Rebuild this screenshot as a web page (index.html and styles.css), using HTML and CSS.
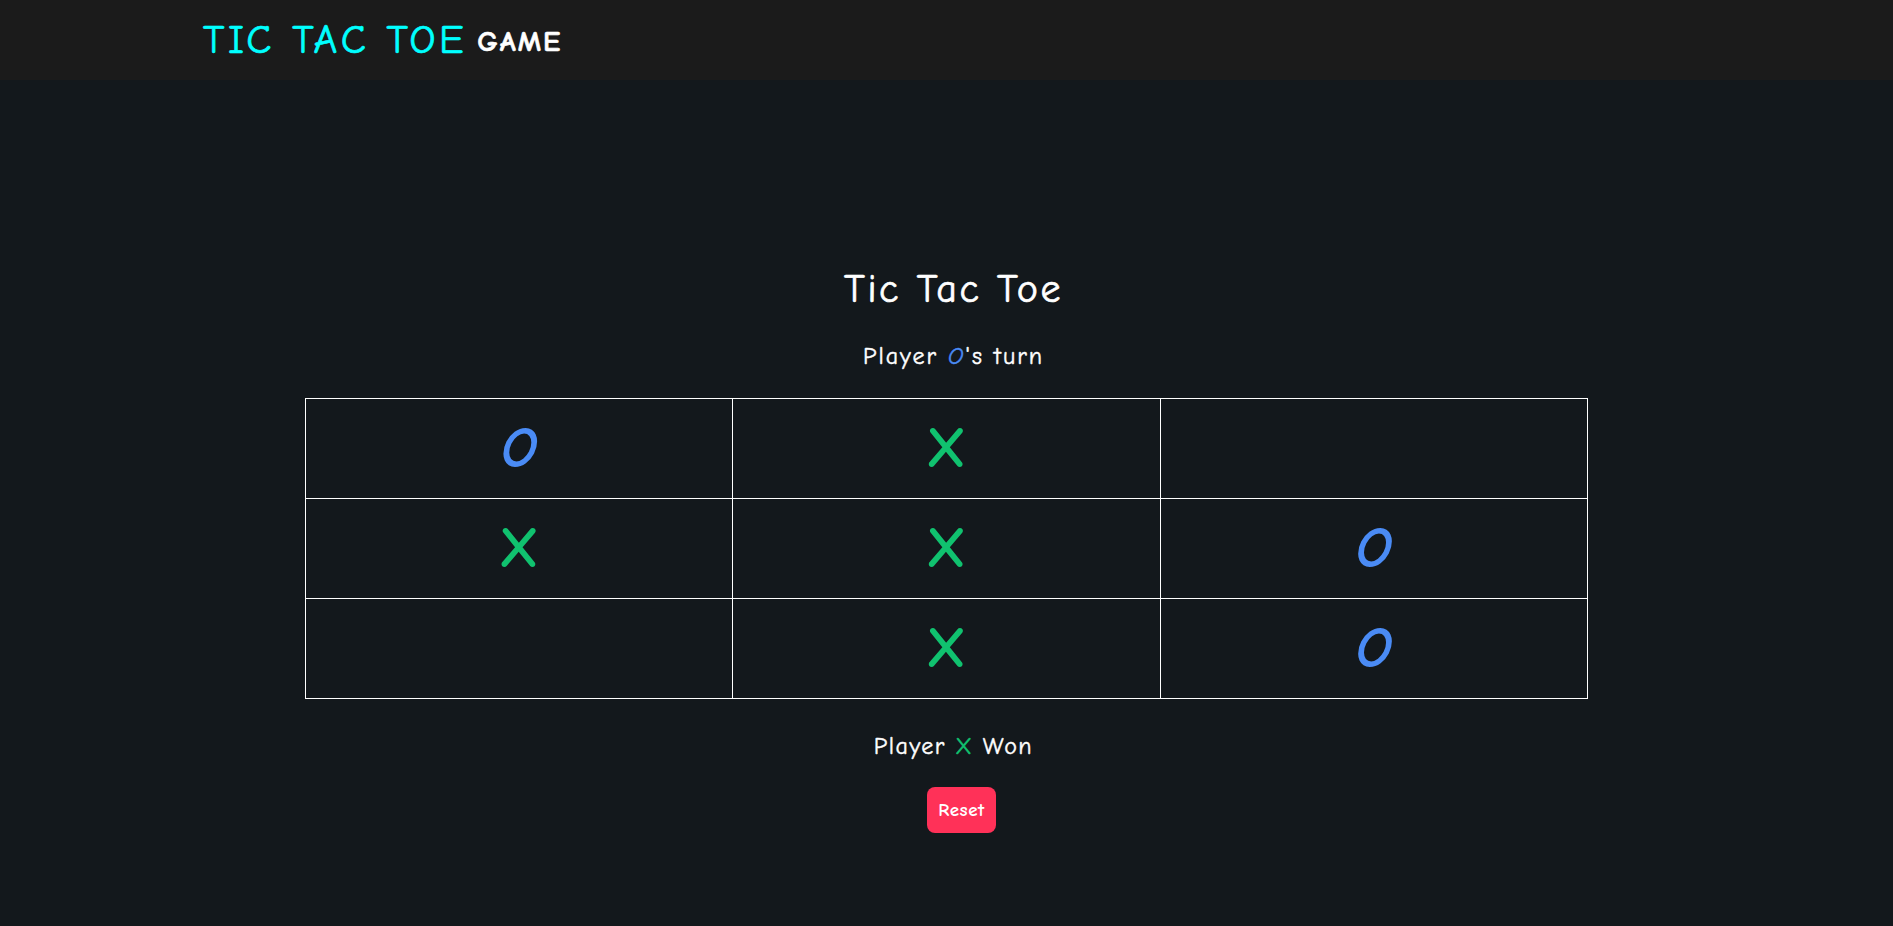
FILE: index.html
```html
<!DOCTYPE html>
<html lang="en">
<head>
<meta charset="utf-8">
<title>Tic Tac Toe</title>
<link rel="stylesheet" href="styles.css">
</head>
<body>
<header class="topbar">
  <span class="brand">TIC TAC TOE</span>
  <span class="brand-sub">GAME</span>
</header>
<main class="game">
  <h1 class="title">Tic Tac Toe</h1>
  <p class="status">Player <span class="mark-o">O</span>'s turn</p>
  <div class="board">
    <div class="cell"><span class="mark-o">O</span></div>
    <div class="cell"><span class="mark-x">X</span></div>
    <div class="cell"></div>
    <div class="cell"><span class="mark-x">X</span></div>
    <div class="cell"><span class="mark-x">X</span></div>
    <div class="cell"><span class="mark-o">O</span></div>
    <div class="cell"></div>
    <div class="cell"><span class="mark-x">X</span></div>
    <div class="cell"><span class="mark-o">O</span></div>
  </div>
  <p class="result">Player <span class="mark-x">X</span> Won</p>
  <button class="reset">Reset</button>
</main>
</body>
</html>
```
FILE: styles.css
```css
html, body {
  margin: 0;
  padding: 0;
}
body {
  background: #13181c;
  color: #ffffff;
  font-family: "Comic Sans MS", "Comic Neue", "DejaVu Sans", sans-serif;
  font-weight: 400;
  min-height: 926px;
}
.topbar {
  height: 80px;
  background: #1b1b1b;
  display: flex;
  align-items: center;
  gap: 10px;
  padding-left: 203px;
  box-sizing: border-box;
}
.brand {
  color: #00ffff;
  font-size: 41px;
  line-height: 48px;
  letter-spacing: 3.5px;
  -webkit-text-stroke: 0.7px currentColor;
}
.brand-sub {
  color: #ffffff;
  font-size: 29px;
  font-weight: 700;
  line-height: 48px;
  padding-top: 4px;
  letter-spacing: 2px;
  -webkit-text-stroke: 0.6px currentColor;
}
.game {
  display: flex;
  flex-direction: column;
  align-items: center;
  padding-top: 185px;
}
.title {
  margin: 0 0 0 14px;
  font-size: 40px;
  font-weight: 400;
  line-height: 48px;
  letter-spacing: 2.5px;
  -webkit-text-stroke: 0.7px currentColor;
}
.status {
  margin: 27px 0 0 14px;
  font-size: 24px;
  line-height: 32px;
  letter-spacing: 2px;
  -webkit-text-stroke: 0.45px currentColor;
}
.mark-o {
  color: #4a8bf5;
  font-style: italic;
}
.mark-x {
  color: #10c26f;
}
.board {
  margin-top: 26px;
  width: 1282px;
  display: grid;
  grid-template-columns: repeat(3, 1fr);
  border-top: 1px solid #ffffff;
  border-left: 1px solid #ffffff;
}
.cell {
  height: 99px;
  border-right: 1px solid #ffffff;
  border-bottom: 1px solid #ffffff;
  display: flex;
  align-items: center;
  justify-content: center;
  font-size: 58px;
  font-weight: 700;
  line-height: 1;
  -webkit-text-stroke: 0;
}
.result {
  margin: 31px 0 0 14px;
  font-size: 24px;
  line-height: 32px;
  letter-spacing: 1.5px;
  -webkit-text-stroke: 0.45px currentColor;
}
.reset {
  margin-top: 25px;
  margin-left: 30px;
  width: 69px;
  height: 46px;
  border: none;
  border-radius: 8px;
  background: #ff3158;
  color: #ffffff;
  font-family: inherit;
  font-size: 19px;
  font-weight: 700;
  letter-spacing: 0.5px;
  padding: 0;
}
```
